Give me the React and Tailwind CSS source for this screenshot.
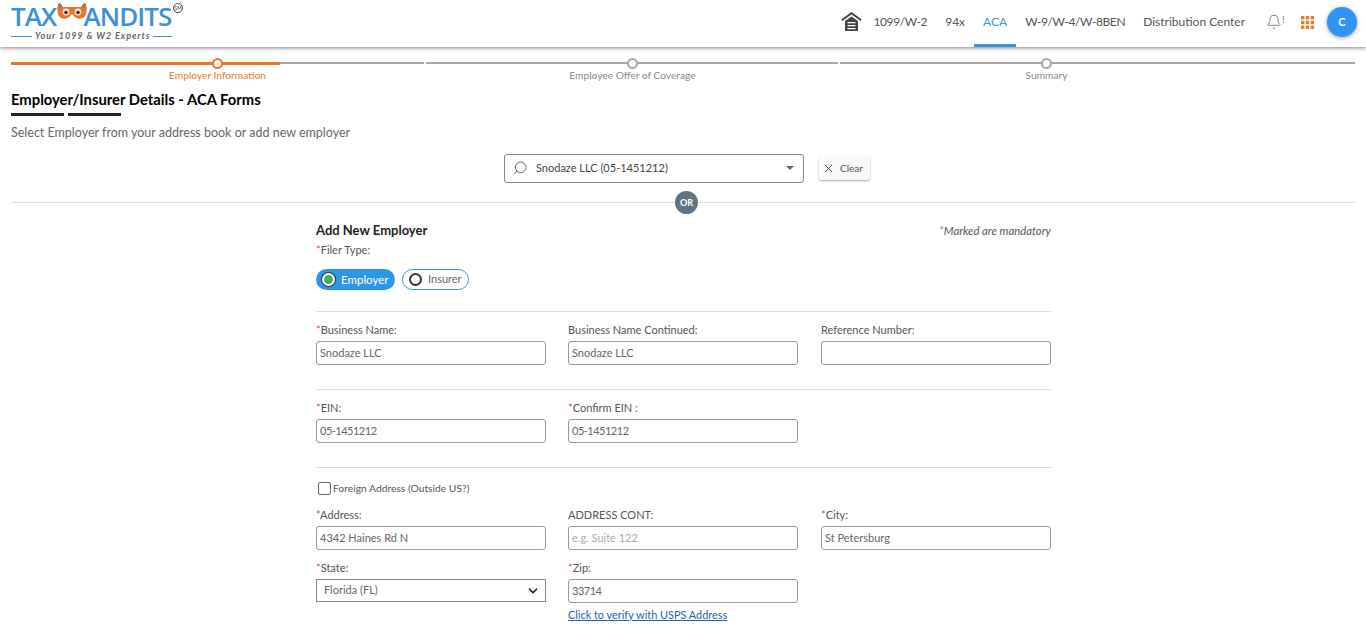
import React from 'react';
import { Bell, ChevronDown, Search, X } from 'lucide-react';

const Req = () => <span className="text-[#d9534f]">*</span>;

const Field = ({ label, required, value, placeholder, tight, className = '' }) => (
    <div className={`w-[230px] ${className}`}>
        <label className="block h-[17px] text-[11px] leading-[17px] text-[#555]">
            {required && <Req />}{label}
        </label>
        <input
            readOnly
            value={value || ''}
            placeholder={placeholder}
            className={`mt-[3px] block w-[230px] h-[24px] px-[3px] pb-[2px] text-[11px] text-[#666] placeholder:text-[#aaa] bg-white border border-[#999] rounded-[3px] outline-none ${tight ? 'tracking-[-0.5px]' : ''}`}
        />
    </div>
);

const Step = ({ label, active, width }) => (
    <div className={width}>
        <div className="relative h-[2px] bg-[#a8a8a8] w-full mt-[1px]">
            {active && <div className="absolute left-0 top-[-0.5px] h-[3px] w-[269px] bg-[#e8772e]" />}
            <div className={`absolute top-[-4px] left-[201px] w-[11px] h-[11px] rounded-full bg-white border-2 ${active ? 'border-[#e8772e]' : 'border-[#a8a8a8]'}`} />
        </div>
        <div className={`w-[413px] text-center text-[10.2px] leading-[14px] mt-[4px] ${active ? 'text-[#e8772e]' : 'text-[#8a8a8a]'}`}>{label}</div>
    </div>
);

const Logo = () => (
    <div className="w-[185px] ml-[11px] shrink-0 relative h-[47px]">
        <div className="flex items-center h-[28px] mt-[2px] text-[#3d8fdc] text-[26px] leading-[28px] font-semibold tracking-[-0.9px]" style={{ fontFamily: '"Open Sans", sans-serif' }}>
            <span>TAX</span>
            <svg width="30" height="17" viewBox="0 0 30 17" className="ml-[1px] mr-[-4px] mt-[-10px] shrink-0">
                <path d="M1 1 L3 0 L6 4 H1 Z M29 1 L27 0 L24 4 H29 Z" fill="#8a7560" />
                <path d="M0 4 H30 L29 11 C28 16 21 17 18 14 L15 11 L12 14 C9 17 2 16 1 11 Z" fill="#e8772e" />
                <circle cx="9" cy="9" r="3.4" fill="#f8e2c8" />
                <circle cx="21" cy="9" r="3.4" fill="#f8e2c8" />
                <circle cx="9" cy="9.5" r="1.8" fill="#333" />
                <circle cx="21" cy="9.5" r="1.8" fill="#333" />
            </svg>
            <span>ANDITS</span>
        </div>
        <div className="absolute left-0 top-[31px] flex items-center w-[161px]">
            <div className="h-px w-[21px] bg-[#3d8fdc]" />
            <span className="px-[3px] text-[9px] leading-[10px] italic font-bold tracking-[0.95px] text-[#666] whitespace-nowrap">Your 1099 &amp; W2 Experts</span>
            <div className="h-px flex-1 bg-[#3d8fdc]" />
        </div>
        <div className="absolute left-[162px] top-[3px] w-[10px] h-[10px] rounded-full border border-[#444] text-[5px] leading-[8px] text-center text-[#444]">SM</div>
    </div>
);

const NavItem = ({ label, active, tight }) => (
    <div className={`h-[47px] flex items-center px-[9px] text-[12px] border-b-[3px] ${tight ? 'tracking-[-0.4px]' : ''} ${active ? 'border-[#3d94e6] text-[#3d94e6]' : 'border-transparent text-[#555]'}`}>
        {label}
    </div>
);

export default function App() {
    return (
        <div className="h-[625px] overflow-hidden bg-white" style={{ fontFamily: 'Lato, sans-serif' }}>
            {/* Header */}
            <header className="h-[47px] flex items-center justify-between bg-white shadow-[0_1px_4px_rgba(0,0,0,0.5)] relative">
                <Logo />
                <div className="flex items-center pr-[9px]">
                    <svg width="21" height="19" viewBox="0 0 21 19" className="mr-[2px] mt-[-4px]">
                        <path d="M0.8 8.2 L10.5 1.2 L20.2 8.2" fill="none" stroke="#444" strokeWidth="2" />
                        <path d="M4 9 L10.5 4.4 L17 9 V19 H4 Z" fill="#444" />
                        <path d="M6.5 10h8v1.3h-8z M6.5 13h8v1.3h-8z M6.5 16h8v1.3h-8z" fill="#fff" />
                    </svg>
                    <NavItem label="1099/W-2" tight />
                    <NavItem label="94x" />
                    <NavItem label="ACA" active />
                    <NavItem label="W-9/W-4/W-8BEN" tight />
                    <NavItem label="Distribution Center" />
                    <div className="ml-[12px] w-[17px] flex items-start text-[#666] mt-[-3px]">
                        <Bell size={16} strokeWidth={1.2} className="shrink-0" />
                        <span className="text-[9px] leading-[11px]">!</span>
                    </div>
                    <svg width="13" height="13" viewBox="0 0 13 13" className="ml-[18px] mr-[13px] mt-[-3px]" fill="#e8772e">
                        {[0, 4.8, 9.6].map(y => [0, 4.8, 9.6].map(x => (
                            <rect key={`${x}-${y}`} x={x} y={y} width="3.4" height="3.4" rx="0.8" />
                        )))}
                    </svg>
                    <div className="w-[30px] h-[30px] rounded-full bg-[#2e96f0] text-white text-[11px] font-bold flex items-center justify-center shadow-[0_1px_4px_rgba(0,0,0,0.4)] mt-[-3px]">C</div>
                </div>
            </header>

            {/* Stepper */}
            <div className="flex gap-[2px] pl-[11px] pr-[11px] pt-[14px]">
                <Step label="Employer Information" active width="w-[413px]" />
                <Step label="Employee Offer of Coverage" width="w-[412px]" />
                <Step label="Summary" width="w-[515px]" />
            </div>

            {/* Title */}
            <div className="px-[11px]">
                <h1 className="mt-[7px] text-[14.8px] leading-[20px] font-bold text-black">Employer/Insurer Details - ACA Forms</h1>
                <div className="flex gap-[4px] mt-[4px]">
                    <div className="w-[53px] h-[3px] bg-[#222]" />
                    <div className="w-[53px] h-[3px] bg-[#222]" />
                </div>
                <p className="mt-[8px] text-[12.5px] leading-[18px] text-[#666]">Select Employer from your address book or add new employer</p>
            </div>

            {/* Employer select */}
            <div className="flex justify-center items-center gap-[15px] mt-[12px] pl-[8px]">
                <div className="w-[300px] h-[29px] flex items-center border border-[#888] rounded-[3px] pl-[7px] pr-[9px] pb-[1px] text-[11px] text-[#444]">
                    <Search size={16} strokeWidth={1.2} className="text-[#444] -scale-x-100" />
                    <span className="ml-[8px] flex-1">Snodaze LLC (05-1451212)</span>
                    <span className="w-0 h-0 border-x-[4px] border-x-transparent border-t-[4px] border-t-[#666]" />
                </div>
                <button className="w-[51px] h-[23px] flex items-center pl-[3px] gap-[5px] text-[10px] text-[#555] bg-[#f9f9f9] rounded-[2px] shadow-[0_1px_2px_rgba(0,0,0,0.35)]">
                    <X size={13} strokeWidth={1.5} className="text-[#333]" />
                    Clear
                </button>
            </div>

            {/* OR divider */}
            <div className="relative mx-[11px] mt-[19px] h-px bg-[#ddd] w-[1344px]">
                <div className="absolute left-[664px] top-[-11px] w-[23px] h-[23px] rounded-full bg-[#5f7480] text-white text-[9px] font-bold flex items-center justify-center">OR</div>
            </div>

            {/* Form */}
            <div className="w-[735px] ml-[316px]">
                <div className="flex justify-between items-start mt-[19px]">
                    <h2 className="text-[13px] leading-[17px] font-bold text-[#222]">Add New Employer</h2>
                    <span className="text-[11.3px] leading-[17px] italic text-[#555]"><Req />Marked are mandatory</span>
                </div>
                <div className="mt-[2px] text-[11px] leading-[17px] text-[#555]"><Req />Filer Type:</div>
                <div className="flex gap-[7px] mt-[11px]">
                    <div className="w-[79px] h-[21px] rounded-full bg-[#2e96ea] flex items-center pl-[6px] text-[11.5px] text-white">
                        <span className="w-[13px] h-[13px] rounded-full bg-[#3fb45f] border-2 border-white ring-1 ring-[#333]" />
                        <span className="ml-[6px]">Employer</span>
                    </div>
                    <div className="w-[67px] h-[21px] rounded-full border border-[#2e96ea] flex items-center pl-[6px] text-[11px] text-[#666]">
                        <span className="w-[13px] h-[13px] rounded-full bg-white border-2 border-[#333]" />
                        <span className="ml-[6px]">Insurer</span>
                    </div>
                </div>

                <div className="h-px bg-[#ddd] mt-[21px]" />
                <div className="flex gap-[22px] mt-[9px]">
                    <Field label="Business Name:" required value="Snodaze LLC" />
                    <Field label="Business Name Continued:" value="Snodaze LLC" />
                    <Field label="Reference Number:" className="ml-[1px]" />
                </div>

                <div className="h-px bg-[#ddd] mt-[24px]" />
                <div className="flex gap-[22px] mt-[9px]">
                    <Field label="EIN:" required value="05-1451212" tight />
                    <Field label="Confirm EIN :" required value="05-1451212" tight />
                </div>

                <div className="h-px bg-[#ddd] mt-[24px]" />
                <label className="flex items-center ml-[2px] mt-[13px] text-[10.3px] leading-[14px] text-[#555]">
                    <span className="w-[13px] h-[13px] border border-[#666] rounded-[2px] mr-[2px]" />
                    Foreign Address (Outside US?)
                </label>

                <div className="flex gap-[22px] mt-[11px]">
                    <Field label="Address:" required value="4342 Haines Rd N" />
                    <Field label="ADDRESS CONT:" placeholder="e.g. Suite 122" />
                    <Field label="City:" required value="St Petersburg" className="ml-[1px]" />
                </div>

                <div className="flex gap-[22px] mt-[9px]">
                    <div className="w-[230px]">
                        <label className="block h-[17px] text-[11px] leading-[17px] text-[#555]"><Req />State:</label>
                        <div className="mt-[3px] h-[23px] flex items-center justify-between border border-[#888] pl-[7px] pr-[5px] text-[11px] text-[#666]">
                            Florida (FL)
                            <ChevronDown size={14} strokeWidth={3} className="text-[#222]" />
                        </div>
                    </div>
                    <div className="w-[230px]">
                        <Field label="Zip:" required value="33714" tight />
                        <a href="#" className="block mt-[4px] text-[10.9px] leading-[16px] text-[#1a5fb4] underline">Click to verify with USPS Address</a>
                    </div>
                </div>
            </div>
        </div>
    );
}
